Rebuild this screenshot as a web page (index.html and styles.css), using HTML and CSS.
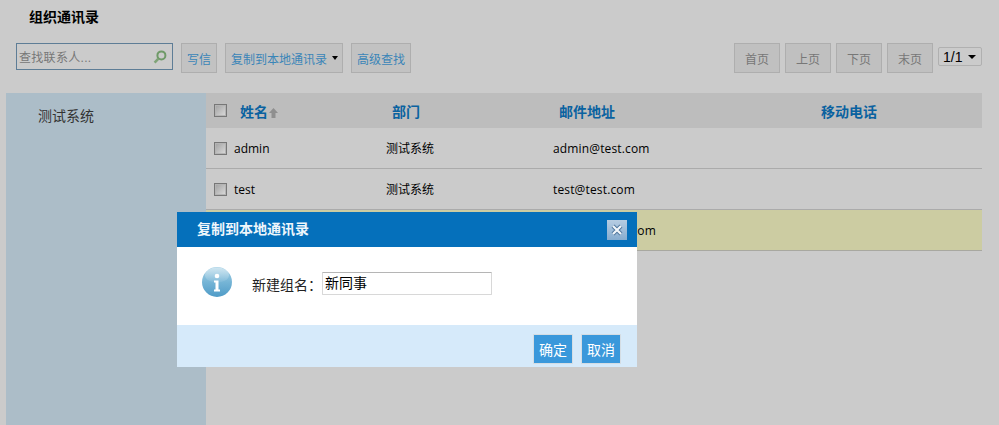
FILE: index.html
```html
<!DOCTYPE html>
<html lang="zh">
<head>
<meta charset="utf-8">
<title>组织通讯录</title>
<link rel="stylesheet" href="styles.css">
</head>
<body>
<div class="page">
  <h1 class="title">组织通讯录</h1>
  <div class="toolbar">
    <div class="search">
      <span class="search-text">查找联系人...</span>
      <svg class="search-icon" width="14" height="14" viewBox="0 0 14 14"><circle cx="8.4" cy="5.4" r="4" fill="none" stroke="#6f9a68" stroke-width="2"/><path d="M5.400 8.600 1.600 12.600" stroke="#7fa377" stroke-width="2.600" fill="none"/></svg>
    </div>
    <button class="btn">写信</button>
    <button class="btn btn-menu">复制到本地通讯录<span class="caret"></span></button>
    <button class="btn">高级查找</button>
    <div class="pager">
      <button class="btn btn-page">首页</button>
      <button class="btn btn-page">上页</button>
      <button class="btn btn-page">下页</button>
      <button class="btn btn-page">末页</button>
      <div class="select"><span class="select-text">1/1</span><span class="caret caret-select"></span></div>
    </div>
  </div>
  <div class="main">
    <aside class="side"><div class="side-item">测试系统</div></aside>
    <div class="table">
      <div class="row head">
        <div class="c-check"><span class="check"></span></div>
        <div class="c-name head-name">姓名<svg class="sort" width="9" height="10" viewBox="0 0 9 10"><path d="M4.5 0 9 5H6.5v5h-4V5H0z" fill="#8f8f8f"/></svg></div>
        <div class="c-dept">部门</div>
        <div class="c-mail">邮件地址</div>
        <div class="c-phone">移动电话</div>
      </div>
      <div class="row">
        <div class="c-check"><span class="check"></span></div>
        <div class="c-name">admin</div>
        <div class="c-dept">测试系统</div>
        <div class="c-mail">admin@test.com</div>
        <div class="c-phone"></div>
      </div>
      <div class="row">
        <div class="c-check"><span class="check"></span></div>
        <div class="c-name">test</div>
        <div class="c-dept">测试系统</div>
        <div class="c-mail">test@test.com</div>
        <div class="c-phone"></div>
      </div>
      <div class="row row-hi">
        <div class="c-check"></div>
        <div class="c-name"></div>
        <div class="c-dept"></div>
        <div class="c-mail">test123@test.com</div>
        <div class="c-phone"></div>
      </div>
    </div>
  </div>
</div>
<div class="dialog">
  <div class="dialog-head">
    <span class="dialog-title">复制到本地通讯录</span>
    <span class="dialog-close"><svg width="14" height="14" viewBox="0 0 14 14"><path d="M3 3 11 11M11 3 3 11" stroke="#4f769c" stroke-width="4" fill="none"/><path d="M3 3 11 11M11 3 3 11" stroke="#f2f6fa" stroke-width="2.200" fill="none"/></svg></span>
  </div>
  <div class="dialog-body">
    <svg class="info" width="32" height="32" viewBox="0 0 32 32">
      <defs>
        <linearGradient id="g" x1="0" y1="0" x2="0" y2="1"><stop offset="0" stop-color="#a9d2e6"/><stop offset=".5" stop-color="#76b5d6"/><stop offset="1" stop-color="#4f9bc7"/></linearGradient>
        <linearGradient id="h" x1="0" y1="0" x2="0" y2="1"><stop offset="0" stop-color="#fff" stop-opacity=".45"/><stop offset="1" stop-color="#fff" stop-opacity=".05"/></linearGradient>
      </defs>
      <circle cx="16" cy="16" r="15" fill="url(#g)"/>
      <ellipse cx="16" cy="9" rx="12" ry="7.500" fill="url(#h)"/>
      <circle cx="16" cy="10" r="2.300" fill="#fff"/>
      <path d="M13 14.500h4.500v9h1.500v2h-6v-2h1.500v-7H13z" fill="#fff"/>
    </svg>
    <label class="field-label">新建组名：</label>
    <div class="field">新同事</div>
  </div>
  <div class="dialog-foot">
    <button class="dlg-btn">确定</button>
    <button class="dlg-btn">取消</button>
  </div>
</div>
</body>
</html>
```
FILE: styles.css
```css
* { box-sizing: border-box; }
html, body { margin: 0; height: 100%; }
body {
  background: #cbcbcb;
  font-family: "Liberation Sans", "Noto Sans CJK SC", sans-serif;
  font-size: 12px;
  color: #000;
  overflow: hidden;
  position: relative;
}
.page { width: 999px; height: 425px; padding: 0 17px 0 6px; display: flex; flex-direction: column; }
.title { margin: 0; padding: 9px 0 0 23px; height: 43px; font-size: 14px; line-height: 17px; font-weight: bold; color: #000; }
.toolbar { display: flex; align-items: flex-start; padding-left: 10px; height: 50px; }
.search {
  width: 157px; height: 27px; border: 1px solid #5e7d96; display: flex; align-items: center;
  justify-content: space-between; padding: 0 2px; margin-right: 8px;
}
.search-text { color: #777; font-size: 12px; letter-spacing: .3px; }
.search-icon { margin-right: 3px; }
.btn {
  height: 30px; padding: 0 5px; margin: 0 8px 0 0; border: 1px solid #aeaeae; background: #c2c2c2;
  color: #3a85b8; font: 12px "Liberation Sans", "Noto Sans CJK SC", sans-serif; white-space: nowrap;
  display: inline-flex; align-items: center;
}
.btn-menu { padding-right: 4px; }
.caret { display: inline-block; margin-left: 5px; border: 4px solid transparent; border-top: 4px solid #000; border-bottom: 0; width: 0; height: 0; border-left-width: 3.500px; border-right-width: 3.500px; }
.pager { margin-left: auto; display: flex; align-items: flex-start; }
.btn-page { width: 46px; justify-content: center; margin-right: 5px; color: #777; background: #c0c0c0; height: 30px; padding: 0; }
.select {
  width: 44px; height: 19px; margin: 4px 0 0; border: 1px solid #b0b0b0; border-radius: 2px; background: #cbcbcb;
  font-size: 14px; line-height: 17px; padding: 0 5px 0 4px; color: #000; display: flex; align-items: center; justify-content: space-between;
}
.select-text { padding-top: 1px; }
.caret-select { margin: 0; border-left-width: 4px; border-right-width: 4px; }
.main { flex: 1; display: flex; }
.side { width: 200px; background: #acbdc8; padding-top: 15px; }
.side-item { padding-left: 32px; font-size: 14px; line-height: 17px; color: #333; }
.table { flex: 1; }
.row { height: 41px; display: flex; align-items: center; border-bottom: 1px solid #ababab; }
.head { height: 35px; background: #bdbdbd; border-bottom: 0; color: #0a62a0; font-size: 14px; font-weight: bold; }
.row-hi { background: #cccca2; border-bottom-color: #a8a8a0; }
.c-check { width: 28px; padding-left: 8px; display: flex; align-items: center; }
.check { width: 13px; height: 13px; border: 1px solid #777; box-shadow: inset 0 0 0 1px #b4b4b4; background: linear-gradient(135deg, #a0a0a0, #dcdcdc); display: block; }
.c-name { width: 152px; }
.head-name { padding-left: 6px; }
.c-dept { width: 167px; padding-bottom: 2px; }
.head .c-dept { padding-bottom: 0; }
.head .c-dept, .head .c-mail { padding-left: 6px; }
.c-mail { width: 262px; }
.c-phone { flex: 1; }
.head .c-phone { padding-left: 6px; }
.row .c-name, .row .c-mail { font-family: "Open Sans", "Noto Sans CJK SC", sans-serif; }
.row .c-mail { letter-spacing: .15px; white-space: nowrap; }
.head .c-name, .head .c-dept, .head .c-mail, .head .c-phone { font-family: "Liberation Sans", "Noto Sans CJK SC", sans-serif; letter-spacing: 0; }
.sort { margin-left: 1px; vertical-align: -1px; }
.dialog {
  position: absolute; left: 177px; top: 212px; width: 460px; height: 155px; background: #fff;
  display: flex; flex-direction: column;
}
.dialog-head { height: 35px; background: #0570bb; display: flex; align-items: center; justify-content: space-between; padding: 0 10px 0 20px; }
.dialog-title { color: #eef6fb; font-size: 14px; font-weight: bold; padding-bottom: 3px; }
.dialog-close { width: 20px; height: 20px; background: linear-gradient(#b7cde2, #86accf); display: flex; align-items: center; justify-content: center; }
.dialog-body { flex: 1; display: flex; align-items: flex-start; padding: 19px 0 0 24px; }
.info { margin-right: 19px; display: block; }
.field-label { font-size: 14px; line-height: 17px; margin-top: 11px; color: #222; width: 70px; }
.field { width: 170px; height: 23px; margin-top: 6px; border: 1px solid #d8d8d8; border-top-color: #b5b5b5; border-radius: 1px; padding-left: 2px; font-size: 14px; line-height: 21px; color: #000; }
.dialog-foot { height: 42px; background: #d6eafa; display: flex; justify-content: flex-end; align-items: flex-start; padding: 9px 16px 0 0; gap: 8px; }
.dlg-btn { width: 40px; height: 30px; padding: 0; border: 1px solid #d4dde4; background: #3a98db; color: #fff; font: 14px "Liberation Sans", "Noto Sans CJK SC", sans-serif; }
```
